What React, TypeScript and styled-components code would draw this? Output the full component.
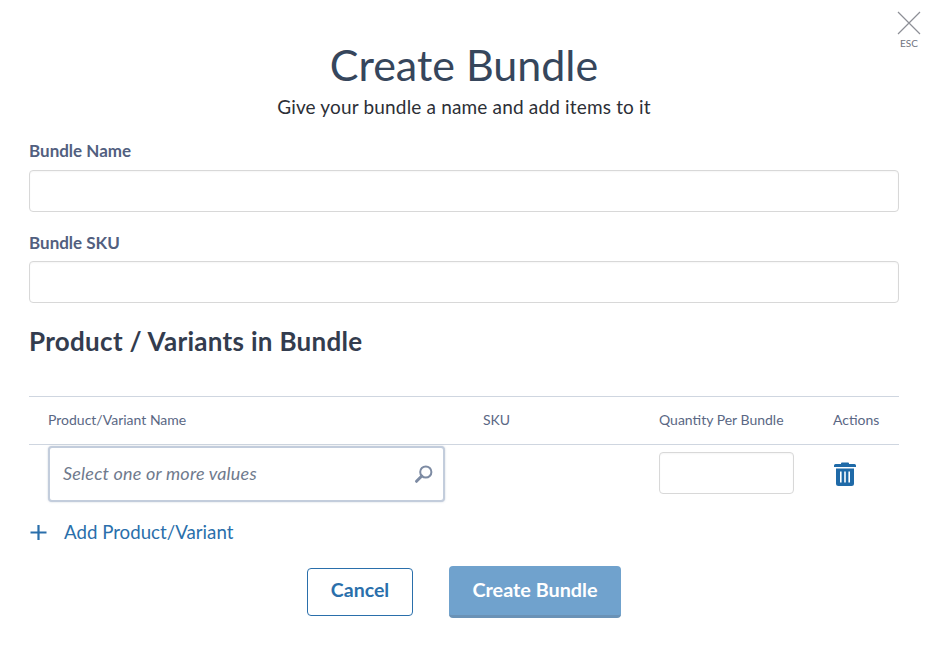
import React from 'react'
import styled, { createGlobalStyle } from 'styled-components'

const GlobalStyle = createGlobalStyle`
  html, body {
    margin: 0;
    padding: 0;
    background: #fff;
    font-family: 'Lato', 'Liberation Sans', sans-serif;
  }
  * { box-sizing: border-box; }
`

const Modal = styled.div`
  position: relative;
  width: 927px;
  height: 664px;
  padding: 37px 28px 0 29px;
  background: #fff;
  overflow: hidden;
`

const CloseButton = styled.button`
  position: absolute;
  top: 11px;
  right: 6px;
  width: 24px;
  padding: 0;
  border: 0;
  background: none;
  display: flex;
  flex-direction: column;
  align-items: center;
  font-family: inherit;
  font-size: 10px;
  line-height: 11px;
  color: #6f7480;

  svg { display: block; margin-bottom: 3px; }
`

const Title = styled.h1`
  margin: 0;
  height: 56px;
  font-size: 43px;
  line-height: 56px;
  font-weight: 400;
  text-align: center;
  color: #36465c;
`

const Subtitle = styled.p`
  margin: 1px 0 0;
  font-size: 19px;
  line-height: 26px;
  letter-spacing: 0.17px;
  text-align: center;
  color: #2c2f36;
`

const Field = styled.div<{ $top: number }>`
  margin-top: ${(p) => p.$top}px;
`

const Label = styled.label<{ $gap: number }>`
  display: block;
  font-size: 17px;
  line-height: 20px;
  font-weight: 700;
  color: #525f7f;
  margin-bottom: ${(p) => p.$gap}px;
`

const TextInput = styled.input`
  display: block;
  width: 100%;
  height: 42px;
  border: 1px solid #d8d8d8;
  border-radius: 4px;
  background: #fff;
  box-shadow: inset 0 1px 2px rgba(0, 0, 0, 0.04);
  outline: none;
`

const SectionTitle = styled.h2`
  margin: 23px 0 0;
  font-size: 26px;
  line-height: 30px;
  letter-spacing: 0.3px;
  font-weight: 700;
  color: #333c4e;
`

const Row = styled.div<{ $header?: boolean }>`
  display: grid;
  grid-template-columns: 435px 176px 174px 1fr;
  padding-left: 19px;
  align-items: center;
  height: ${(p) => (p.$header ? '48px' : '58px')};
  border-top: 1px solid #cfd6e0;
  margin-top: ${(p) => (p.$header ? '40px' : '0')};
`

const HeadCell = styled.div`
  font-size: 14px;
  line-height: 18px;
  padding-bottom: 2px;
  color: #5a6784;
`

const SelectBox = styled.div`
  width: 397px;
  height: 56px;
  margin-top: 1px;
  padding: 0 9px 3px 13px;
  display: flex;
  align-items: center;
  justify-content: space-between;
  border: 2px solid #c3cddc;
  border-radius: 4px;
  background: #fff;
  box-shadow: 0 0 2px rgba(100, 120, 150, 0.35);
  font-size: 18px;
  letter-spacing: 0.2px;
  font-style: italic;
  color: #6f7a8d;

  svg { margin-top: 2px; }
`

const QuantityInput = styled(TextInput)`
  width: 135px;
  margin-top: -1px;
`

const TrashButton = styled.button`
  width: 24px;
  padding: 0;
  border: 0;
  background: none;
  svg { display: block; }
`

const AddLink = styled.a`
  display: flex;
  align-items: center;
  gap: 16px;
  margin-top: 15px;
  height: 30px;
  font-size: 18.7px;
  color: #2a6fab;

  svg { display: block; margin-top: 1px; }
`

const Actions = styled.div`
  display: flex;
  justify-content: center;
  align-items: center;
  gap: 36px;
  margin-top: 19px;
`

const CancelButton = styled.button`
  width: 106px;
  height: 48px;
  padding: 0 0 5px;
  border: 1px solid #2a6fab;
  border-radius: 4px;
  background: #fff;
  font-family: inherit;
  font-size: 19.5px;
  font-weight: 700;
  color: #2a6fab;
`

const SubmitButton = styled.button`
  width: 172px;
  height: 52px;
  padding: 0 0 4px;
  border: 0;
  border-bottom: 3px solid #6a92b6;
  border-radius: 4px;
  background: #70a2cd;
  font-family: inherit;
  font-size: 19.8px;
  font-weight: 700;
  color: #fff;
`

const App: React.FC = () => {
  return (
    <Modal>
      <GlobalStyle />
      <CloseButton>
        <svg width="24" height="24" viewBox="0 0 24 24">
          <path d="M1 1 L23 23 M23 1 L1 23" stroke="#8d8f96" strokeWidth="1.2" fill="none" />
        </svg>
        ESC
      </CloseButton>
      <Title>Create Bundle</Title>
      <Subtitle>Give your bundle a name and add items to it</Subtitle>
      <Field $top={21}>
        <Label $gap={9}>Bundle Name</Label>
        <TextInput />
      </Field>
      <Field $top={21}>
        <Label $gap={8}>Bundle SKU</Label>
        <TextInput />
      </Field>
      <SectionTitle>Product / Variants in Bundle</SectionTitle>
      <Row $header>
        <HeadCell>Product/Variant Name</HeadCell>
        <HeadCell>SKU</HeadCell>
        <HeadCell>Quantity Per Bundle</HeadCell>
        <HeadCell>Actions</HeadCell>
      </Row>
      <Row>
        <SelectBox>
          Select one or more values
          <svg width="20" height="20" viewBox="0 0 20 20">
            <circle cx="11.8" cy="8" r="5.6" stroke="#7d8ba3" strokeWidth="2" fill="none" />
            <path d="M7.8 12 L2.5 17.3" stroke="#7d8ba3" strokeWidth="3" strokeLinecap="round" />
          </svg>
        </SelectBox>
        <div />
        <QuantityInput />
        <TrashButton>
          <svg width="24" height="26" viewBox="0 0 24 26">
            <path d="M9 1.5 h6 a1 1 0 0 1 1 1 V3 h5.5 a1.5 1.5 0 0 1 1.5 1.5 V6 H1 V4.5 A1.5 1.5 0 0 1 2.5 3 H8 v-.5 a1 1 0 0 1 1-1z" fill="#1f6aa8" />
            <path fillRule="evenodd" d="M3 7.5 H21 V22.5 a2.5 2.5 0 0 1 -2.5 2.5 H5.5 A2.5 2.5 0 0 1 3 22.5z M7 10.5 v11 h1.6 v-11z M11.2 10.5 v11 h1.6 v-11z M15.4 10.5 v11 h1.6 v-11z" fill="#1f6aa8" />
          </svg>
        </TrashButton>
      </Row>
      <AddLink>
        <svg width="19" height="19" viewBox="0 0 19 19">
          <path d="M9.5 2 V17 M1.5 9.5 H17.5" stroke="#2a6fab" strokeWidth="2.2" fill="none" />
        </svg>
        Add Product/Variant
      </AddLink>
      <Actions>
        <CancelButton>Cancel</CancelButton>
        <SubmitButton>Create Bundle</SubmitButton>
      </Actions>
    </Modal>
  )
}

export default App
